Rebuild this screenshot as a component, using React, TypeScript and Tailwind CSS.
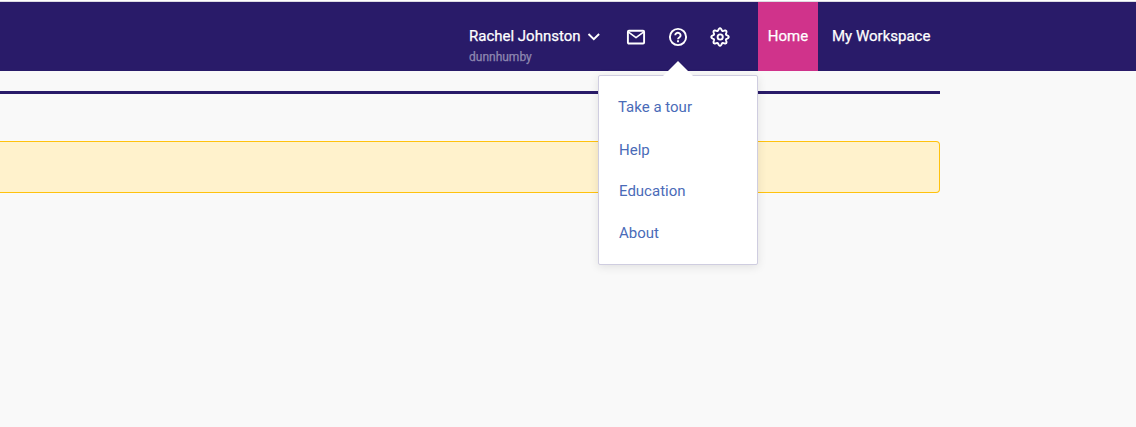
function MailIcon() {
  return (
    <svg className="block h-5 w-5" viewBox="0 0 20 20" fill="none" stroke="currentColor" strokeWidth="1.9" strokeLinejoin="round">
      <rect x="1.900" y="3.700" width="16.200" height="12.800" rx="1" />
      <path d="M2.200 4.900L10 10.600l7.800-5.700" strokeWidth="1.600" />
    </svg>
  );
}

function HelpIcon() {
  return (
    <svg className="block h-5 w-5" viewBox="0 0 20 20" fill="none" stroke="currentColor" strokeWidth="1.9">
      <circle cx="10" cy="10" r="8.1" />
      <path d="M7.200 8.200a2.700 2.500 0 1 1 4.300 2.100c-.9.6-1.500.9-1.500 1.900" />
      <path d="M10 13.200v2" />
    </svg>
  );
}

const gearOutline = Array.from({ length: 96 }, (_, i) => {
  const angle = (i / 96) * Math.PI * 2;
  const radius = 7.6 + 1.15 * Math.cos(8 * angle);
  return `${(10 + radius * Math.cos(angle)).toFixed(2)},${(10 + radius * Math.sin(angle)).toFixed(2)}`;
}).join(" ");

function GearIcon() {
  return (
    <svg className="block h-5 w-5 overflow-visible" viewBox="0 0 20 20" fill="none" stroke="currentColor" strokeWidth="1.9" strokeLinejoin="round">
      <polygon points={gearOutline} />
      <circle cx="10.200" cy="10" r="2.6" />
    </svg>
  );
}

const menuItems = [
  { label: "Take a tour", style: "mb-[23px] -ml-px" },
  { label: "Help", style: "mb-[21px]" },
  { label: "Education", style: "mb-[22px]" },
  { label: "About", style: "" },
];

function HelpMenu() {
  return (
    <div className="absolute top-[48px] left-1/2 z-10 h-[190px] w-[160px] -translate-x-1/2 rounded-[2px] border border-[#cfcde0] bg-white pt-[21px] pl-5 text-[15px] leading-5 font-normal text-[#4a6bb8] shadow-[0_2px_10px_rgba(0,0,0,0.1)] [-webkit-text-stroke:0]">
      <svg className="absolute -top-[15px] left-[64px] block h-[15px] w-[30px]" viewBox="0 0 30 15">
        <path d="M0 15L15 0l15 15z" fill="white" />
      </svg>
      {menuItems.map((item) => (
        <a key={item.label} className={`block whitespace-nowrap ${item.style}`}>{item.label}</a>
      ))}
    </div>
  );
}

export default function App() {
  return (
    <div className="h-[427px] w-[1136px] overflow-hidden bg-[#f9f9f9] font-['Roboto',sans-serif]">
      <div className="h-0.5 border-b border-[#dcdbe2] bg-white" />
      <header className="flex h-[69px] justify-end bg-[#291b69] pr-[196px] text-[15px] leading-5 font-normal text-white [-webkit-text-stroke:0.25px]">
        <div className="mr-[25px] w-[132px] pt-6">
          <div className="flex items-center whitespace-nowrap">
            <span className="w-[111px]">Rachel Johnston</span>
            <svg className="mt-px ml-[7px] block h-2 w-[14px]" viewBox="0 0 14 8" fill="none" stroke="currentColor" strokeWidth="1.9">
              <path d="M1.500 1l5.300 5.200L12.100 1" />
            </svg>
          </div>
          <div className="pt-px text-xs leading-5 text-[#8e87b0]">dunnhumby</div>
        </div>
        <div className="mr-[28px] flex gap-[22px] pt-[25px]">
          <MailIcon />
          <div className="relative h-5 w-5">
            <HelpIcon />
            <HelpMenu />
          </div>
          <GearIcon />
        </div>
        <nav className="flex">
          <a className="w-[60px] bg-[#d0338b] pt-6 text-center">Home</a>
          <a className="w-[122px] pt-6 pl-[14px] whitespace-nowrap">My Workspace</a>
        </nav>
      </header>
      <main className="w-[940px] pt-5">
        <div className="h-[3px] bg-[#291b69]" />
        <div className="mt-[47px] h-[52px] rounded-r-[4px] border border-l-0 border-[#ffc20e] bg-[#fff2cc]" />
      </main>
    </div>
  );
}
